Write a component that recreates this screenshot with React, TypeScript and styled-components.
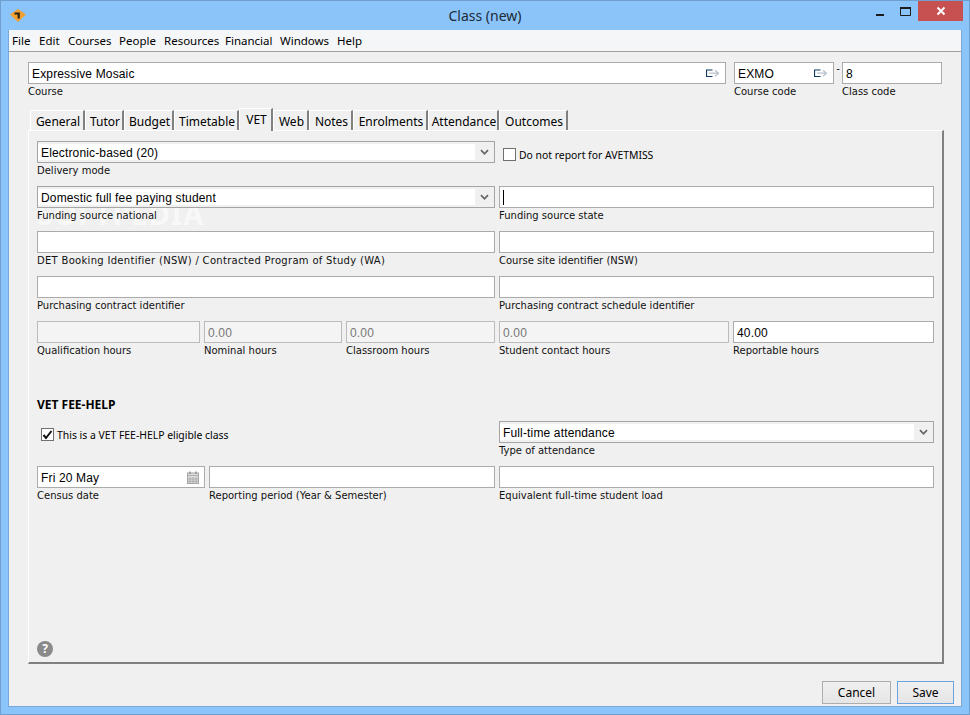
import styled, { createGlobalStyle } from "styled-components";

const Global = createGlobalStyle`
  html, body {
    margin: 0;
    padding: 0;
    width: 970px;
    height: 715px;
    overflow: hidden;
  }
  * {
    box-sizing: border-box;
  }
`;

const UI_FONT = `"Noto Sans", "DejaVu Sans", sans-serif`;
const INPUT_FONT = `"Liberation Sans", Arial, sans-serif`;
const LABEL_FONT = `"DejaVu Sans", Tahoma, sans-serif`;

const Frame = styled.div`
  width: 970px;
  height: 715px;
  display: flex;
  flex-direction: column;
  padding: 0 7px 7px;
  background: #8ac4f9;
  border: 1px solid #6e9fce;
  font-family: ${UI_FONT};
  color: #000;
`;

const TitleBar = styled.div`
  position: relative;
  height: 29px;
  flex: none;
  display: flex;
  align-items: center;
  justify-content: center;
`;

const AppIcon = styled.svg`
  position: absolute;
  left: 2px;
  top: 8px;
`;

const Title = styled.div`
  font-size: 14px;
  color: #1d2a38;
`;

const WindowControls = styled.div`
  position: absolute;
  right: -1px;
  top: 0;
  display: flex;
  align-items: flex-start;
`;

const ControlButton = styled.div<{ $w: number; $close?: boolean }>`
  width: ${({ $w }) => $w}px;
  height: 20px;
  display: flex;
  align-items: center;
  justify-content: center;
  background: ${({ $close }) => ($close ? "#c75050" : "transparent")};
`;

const Client = styled.div`
  flex: 1;
  display: flex;
  flex-direction: column;
  background: #f0f0f0;
  border: 1px solid #79a9d8;
  border-top: 0;
  min-height: 0;
`;

const MenuBar = styled.div`
  height: 22px;
  flex: none;
  display: flex;
  align-items: center;
  padding-left: 3px;
  background: #f5f6f7;
  border-bottom: 1px solid #a0a0a0;
  font-size: 11.5px;
`;

const MenuItem = styled.span<{ $w: number }>`
  width: ${({ $w }) => $w}px;
  flex: none;
`;

const Content = styled.div`
  flex: 1;
  display: flex;
  flex-direction: column;
  padding: 10px 19px 0;
  min-height: 0;
`;

const TopRow = styled.div`
  display: flex;
  align-items: flex-start;
`;

const Dash = styled.div`
  width: 8px;
  text-align: center;
  font-size: 10px;
  line-height: 12px;
`;

const Field = styled.div<{ $w?: number }>`
  display: flex;
  flex-direction: column;
  width: ${({ $w }) => ($w ? `${$w}px` : "auto")};
  flex: ${({ $w }) => ($w ? "none" : "1")};
  height: 45px;
`;

const Box = styled.div<{ $disabled?: boolean }>`
  height: 22px;
  display: flex;
  align-items: center;
  justify-content: space-between;
  padding: 1px 5px 0 3px;
  border: 1px solid ${({ $disabled }) => ($disabled ? "#bcbcbc" : "#ababab")};
  background: ${({ $disabled }) => ($disabled ? "#f4f4f4" : "#fff")};
  color: ${({ $disabled }) => ($disabled ? "#777" : "#000")};
  font-family: ${INPUT_FONT};
  font-size: 12px;
  letter-spacing: 0.15px;
  white-space: nowrap;
`;

const Caret = styled.span`
  width: 1px;
  height: 15px;
  background: #000;
`;

const SelectBox = styled.div`
  height: 22px;
  display: flex;
  align-items: stretch;
  border: 1px solid #a5a5a5;
  background: #f0f0f0;
  padding: 2px 0;
`;

const SelectValue = styled.div`
  flex: 1;
  display: flex;
  align-items: center;
  padding: 1px 0 0 3px;
  background: #fff;
  font-family: ${INPUT_FONT};
  font-size: 12px;
  letter-spacing: 0.15px;
  white-space: nowrap;
`;

const SelectArrow = styled.div`
  width: 19px;
  flex: none;
  display: flex;
  align-items: center;
  justify-content: center;
`;

const Caption = styled.div<{ $spaced?: boolean }>`
  font-family: ${LABEL_FONT};
  font-size: 10px;
  line-height: 14px;
  margin-top: 1px;
  color: #111;
  letter-spacing: ${({ $spaced }) => ($spaced ? "0.3px" : "0")};
  white-space: nowrap;
`;

const TabStrip = styled.div`
  display: flex;
  align-items: flex-end;
  height: 23px;
  padding-left: 2px;
  position: relative;
  z-index: 1;
`;

const Tab = styled.div<{ $w: number; $active?: boolean }>`
  width: ${({ $w }) => $w}px;
  height: ${({ $active }) => ($active ? "23px" : "20px")};
  margin-bottom: ${({ $active }) => ($active ? "-1px" : "0")};
  display: flex;
  align-items: ${({ $active }) => ($active ? "flex-start" : "center")};
  justify-content: center;
  font-size: 12px;
  padding: ${({ $active }) => ($active ? "2px" : "1px")} 0 0 2px;
  border-top: 1px solid #fff;
  border-left: 1px solid #fff;
  border-right: 2px solid #808080;
  background: #f0f0f0;
`;

const Panel = styled.div`
  position: relative;
  width: 916px;
  height: 534px;
  flex: none;
  display: flex;
  flex-direction: column;
  padding: 10px 8px 5px 8px;
  border-top: 1px solid #fff;
  border-left: 1px solid #fff;
  border-right: 2px solid #808080;
  border-bottom: 2px solid #808080;
`;

const FormRow = styled.div`
  position: relative;
  z-index: 1;
  display: flex;
  gap: 4px;
`;

const CheckRow = styled.label<{ $indent: number }>`
  display: flex;
  align-items: center;
  gap: 3px;
  height: 27px;
  padding-left: ${({ $indent }) => $indent}px;
  font-size: 10.4px;
  white-space: nowrap;
`;

const CheckMark = styled.span`
  width: 13px;
  height: 13px;
  flex: none;
  display: flex;
  align-items: center;
  justify-content: center;
  background: #fff;
  border: 1px solid #707070;
`;

const Heading = styled.div`
  font-size: 12px;
  font-weight: 700;
  line-height: 14px;
  margin-top: 32px;
  margin-bottom: 9px;
`;

const HelpIcon = styled.div`
  margin-top: auto;
  width: 16px;
  height: 16px;
  border-radius: 50%;
  background: #8a8a8a;
  color: #fff;
  display: flex;
  align-items: center;
  justify-content: center;
  font-size: 12px;
  font-weight: 700;
  line-height: 1;
`;

const Watermark = styled.div`
  position: absolute;
  left: 8px;
  top: 67px;
  font-size: 29px;
  line-height: 32px;
  font-weight: 700;
  letter-spacing: 1px;
  color: #f8f8f8;
  pointer-events: none;
`;

const Footer = styled.div`
  flex: 1;
  display: flex;
  justify-content: flex-end;
  align-items: flex-end;
  gap: 6px;
  margin-right: -19px;
  padding: 0 7px 2px 0;
`;

const Button = styled.div<{ $w: number; $default?: boolean }>`
  width: ${({ $w }) => $w}px;
  height: 23px;
  display: flex;
  align-items: center;
  justify-content: center;
  font-size: 12px;
  border: 1px solid ${({ $default }) => ($default ? "#6aa3e0" : "#adadad")};
  background: linear-gradient(#f0f0f0, #e5e5e5);
`;

const LinkArrow = () => (
  <svg width="14" height="9" viewBox="0 0 14 9">
    <path d="M6.5 1H0.5V7.5H6.5" fill="none" stroke="#0f3a63" strokeWidth="1.2" />
    <path d="M3 4.2H12M9 1.2L12.5 4.2L9 7.2" fill="none" stroke="#b9c2cc" strokeWidth="1.2" />
  </svg>
);

const Chevron = () => (
  <svg width="9" height="7" viewBox="0 0 9 7">
    <path d="M1 1.2L4.5 4.8L8 1.2" fill="none" stroke="#666" strokeWidth="1.8" />
  </svg>
);

const Calendar = () => (
  <svg width="12" height="13" viewBox="0 0 12 13">
    <rect x="0.5" y="2" width="11" height="10.5" fill="#dcdcdc" stroke="#a5a5a5" />
    <path d="M0.5 4.5H11.5M3 6V12M6 6V12M9 6V12M1 8H11M1 10.3H11" stroke="#a5a5a5" strokeWidth="0.8" />
    <path d="M3 0.5V3M9 0.5V3" stroke="#8c8c8c" strokeWidth="1.4" />
  </svg>
);

const tabs = [
  { label: "General", w: 55 },
  { label: "Tutor", w: 39 },
  { label: "Budget", w: 50 },
  { label: "Timetable", w: 65 },
  { label: "VET", w: 34, active: true },
  { label: "Web", w: 36 },
  { label: "Notes", w: 44 },
  { label: "Enrolments", w: 75 },
  { label: "Attendance", w: 71 },
  { label: "Outcomes", w: 69 },
];

const menus = [
  { label: "File", w: 27 },
  { label: "Edit", w: 29 },
  { label: "Courses", w: 51 },
  { label: "People", w: 45 },
  { label: "Resources", w: 61 },
  { label: "Financial", w: 55 },
  { label: "Windows", w: 57 },
  { label: "Help", w: 30 },
];

export default function App() {
  return (
    <Frame>
      <Global />
      <TitleBar>
        <AppIcon width="16" height="13" viewBox="0 0 16 13">
          <path d="M8 0L16 5.5L8 13L0 5.5Z" fill="#f0a030" />
          <path d="M4.5 3.5H9.8V9.5H7.6V5.6H4.5Z" fill="#2a2118" />
        </AppIcon>
        <Title>Class (new)</Title>
        <WindowControls>
          <ControlButton $w={27}>
            <svg width="8" height="9" viewBox="0 0 8 9">
              <rect x="0" y="7" width="8" height="2" fill="#1c1c1c" />
            </svg>
          </ControlButton>
          <ControlButton $w={25}>
            <svg width="11" height="9" viewBox="0 0 11 9">
              <path d="M0.5 1.5H10.5V8.5H0.5Z" fill="none" stroke="#1c1c1c" />
              <rect x="0" y="0" width="11" height="2" fill="#1c1c1c" />
            </svg>
          </ControlButton>
          <ControlButton $w={45} $close>
            <svg width="10" height="10" viewBox="0 0 10 10">
              <path d="M1.5 1.5L8.5 8.5M8.5 1.5L1.5 8.5" stroke="#fff" strokeWidth="2" />
            </svg>
          </ControlButton>
        </WindowControls>
      </TitleBar>
      <Client>
        <MenuBar>
          {menus.map((m) => (
            <MenuItem key={m.label} $w={m.w}>
              {m.label}
            </MenuItem>
          ))}
        </MenuBar>
        <Content>
          <TopRow>
            <Field $w={698}>
              <Box>
                Expressive Mosaic
                <LinkArrow />
              </Box>
              <Caption>Course</Caption>
            </Field>
            <Dash />
            <Field $w={100}>
              <Box>
                EXMO
                <LinkArrow />
              </Box>
              <Caption>Course code</Caption>
            </Field>
            <Dash>-</Dash>
            <Field $w={100}>
              <Box>8</Box>
              <Caption>Class code</Caption>
            </Field>
          </TopRow>
          <TabStrip>
            {tabs.map((t) => (
              <Tab key={t.label} $w={t.w} $active={t.active}>
                {t.label}
              </Tab>
            ))}
          </TabStrip>
          <Panel>
            <Watermark>SOFTPEDIA</Watermark>
            <FormRow>
              <Field $w={458}>
                <SelectBox>
                  <SelectValue>Electronic-based (20)</SelectValue>
                  <SelectArrow>
                    <Chevron />
                  </SelectArrow>
                </SelectBox>
                <Caption>Delivery mode</Caption>
              </Field>
              <Field>
                <CheckRow $indent={4}>
                  <CheckMark />
                  Do not report for AVETMISS
                </CheckRow>
              </Field>
            </FormRow>
            <FormRow>
              <Field $w={458}>
                <SelectBox>
                  <SelectValue>Domestic full fee paying student</SelectValue>
                  <SelectArrow>
                    <Chevron />
                  </SelectArrow>
                </SelectBox>
                <Caption>Funding source national</Caption>
              </Field>
              <Field>
                <Box>
                  <Caret />
                </Box>
                <Caption>Funding source state</Caption>
              </Field>
            </FormRow>
            <FormRow>
              <Field $w={458}>
                <Box />
                <Caption $spaced>DET Booking Identifier (NSW) / Contracted Program of Study (WA)</Caption>
              </Field>
              <Field>
                <Box />
                <Caption>Course site identifier (NSW)</Caption>
              </Field>
            </FormRow>
            <FormRow>
              <Field $w={458}>
                <Box />
                <Caption>Purchasing contract identifier</Caption>
              </Field>
              <Field>
                <Box />
                <Caption>Purchasing contract schedule identifier</Caption>
              </Field>
            </FormRow>
            <FormRow>
              <Field $w={163}>
                <Box $disabled />
                <Caption>Qualification hours</Caption>
              </Field>
              <Field $w={138}>
                <Box $disabled>0.00</Box>
                <Caption>Nominal hours</Caption>
              </Field>
              <Field $w={149}>
                <Box $disabled>0.00</Box>
                <Caption>Classroom hours</Caption>
              </Field>
              <Field $w={230}>
                <Box $disabled>0.00</Box>
                <Caption>Student contact hours</Caption>
              </Field>
              <Field>
                <Box>40.00</Box>
                <Caption>Reportable hours</Caption>
              </Field>
            </FormRow>
            <Heading>VET FEE-HELP</Heading>
            <FormRow>
              <Field $w={458}>
                <CheckRow $indent={4}>
                  <CheckMark>
                    <svg width="11" height="10" viewBox="0 0 11 10">
                      <path d="M1.5 5L4 8L9.5 1" fill="none" stroke="#111" strokeWidth="2" />
                    </svg>
                  </CheckMark>
                  This is a VET FEE-HELP eligible class
                </CheckRow>
              </Field>
              <Field>
                <SelectBox>
                  <SelectValue>Full-time attendance</SelectValue>
                  <SelectArrow>
                    <Chevron />
                  </SelectArrow>
                </SelectBox>
                <Caption>Type of attendance</Caption>
              </Field>
            </FormRow>
            <FormRow>
              <Field $w={168}>
                <Box>
                  Fri 20 May
                  <Calendar />
                </Box>
                <Caption>Census date</Caption>
              </Field>
              <Field $w={286}>
                <Box />
                <Caption>Reporting period (Year &amp; Semester)</Caption>
              </Field>
              <Field>
                <Box />
                <Caption>Equivalent full-time student load</Caption>
              </Field>
            </FormRow>
            <HelpIcon>?</HelpIcon>
          </Panel>
          <Footer>
            <Button $w={69}>Cancel</Button>
            <Button $w={57} $default>
              Save
            </Button>
          </Footer>
        </Content>
      </Client>
    </Frame>
  );
}
